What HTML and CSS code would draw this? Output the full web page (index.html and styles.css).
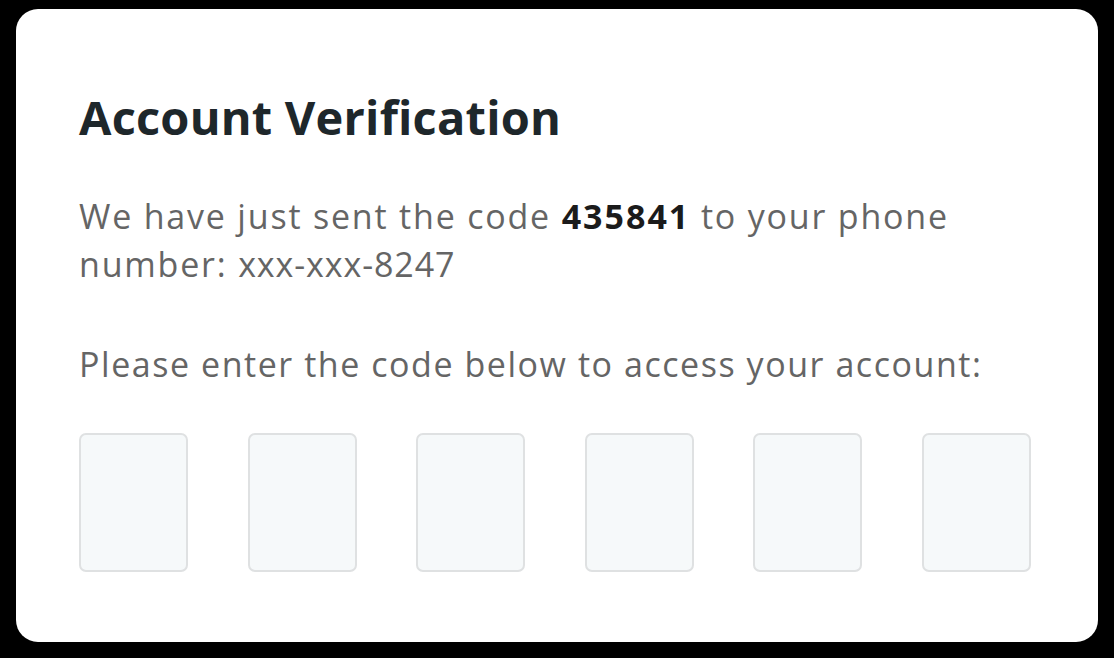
FILE: index.html
```html
<!DOCTYPE html>
<html>
<head>
<meta charset="utf-8">
<link rel="stylesheet" href="styles.css">
</head>
<body>
<div class="card">
  <h1 class="title">Account Verification</h1>
  <p class="msg">We have just sent the code <strong>435841</strong> to your phone<br>number: <span class="mask">xxx-xxx-8247</span></p>
  <p class="prompt">Please enter the code below to access your account:</p>
  <div class="boxes">
    <div class="box"></div>
    <div class="box"></div>
    <div class="box"></div>
    <div class="box"></div>
    <div class="box"></div>
    <div class="box"></div>
  </div>
</div>
</body>
</html>
```
FILE: styles.css
```css
html, body {
  margin: 0;
  padding: 0;
  background: #000;
  width: 1114px;
  height: 658px;
  overflow: hidden;
}
body {
  padding-top: 9px;
  padding-left: 16px;
  box-sizing: border-box;
  font-family: "Open Sans", "Noto Sans", sans-serif;
}
.card {
  width: 1082px;
  height: 633px;
  background: #fff;
  border-radius: 22px;
  box-sizing: border-box;
  padding: 80px 0 0 63px;
}
.title {
  margin: 0;
  font-size: 47px;
  line-height: 56px;
  font-weight: 700;
  color: #1e272b;
  letter-spacing: 0.2px;
}
.msg {
  margin: 47px 0 0;
  font-size: 34px;
  line-height: 48px;
  color: #656565;
  letter-spacing: 1.8px;
}
.msg strong {
  color: #1b1b1b;
  font-weight: 700;
  letter-spacing: 2px;
}
.msg .mask {
  letter-spacing: 0.9px;
}
.prompt {
  margin: 52px 0 0;
  font-size: 34px;
  line-height: 48px;
  color: #656565;
  letter-spacing: 1.55px;
}
.boxes {
  margin-top: 45px;
  width: 952px;
  display: flex;
  justify-content: space-between;
}
.box {
  width: 109px;
  height: 139px;
  box-sizing: border-box;
  border: 2px solid #dfe1e2;
  border-radius: 7px;
  background: #f6f9fa;
}
```
